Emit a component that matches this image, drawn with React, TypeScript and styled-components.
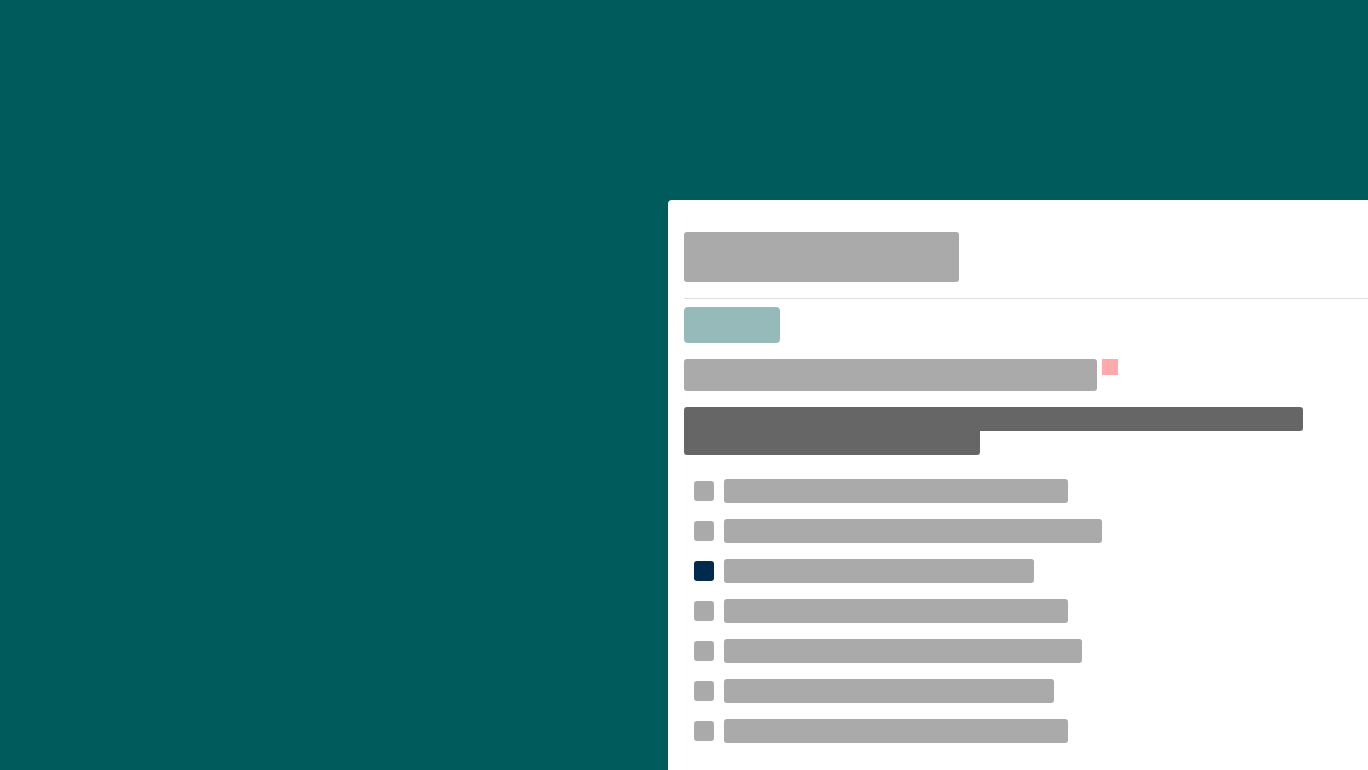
import React from "react";
import styled, { createGlobalStyle } from "styled-components";

const GlobalStyle = createGlobalStyle`
  html, body {
    margin: 0;
    padding: 0;
    background: #005c5c;
    font-family: "Liberation Sans", Arial, sans-serif;
  }
`;

const Page = styled.div`
  width: 1368px;
  height: 770px;
  overflow: hidden;
  background: #005c5c;
  display: flex;
  align-items: flex-start;
  padding: 200px 0 0 668px;
  box-sizing: border-box;
`;

const Card = styled.div`
  flex: 0 0 740px;
  height: 600px;
  background: #ffffff;
  border-radius: 4px 0 0 0;
  padding: 32px 0 0 16px;
  box-sizing: border-box;
  display: flex;
  flex-direction: column;
`;

const TitleBlock = styled.div`
  width: 275px;
  height: 50px;
  background: #aaaaaa;
  border-radius: 3px;
`;

const Divider = styled.hr`
  border: none;
  border-top: 1px solid #dddddd;
  margin: 16px 0 0;
  width: 100%;
`;

const Tag = styled.div`
  width: 96px;
  height: 36px;
  margin-top: 8px;
  background: #96baba;
  border-radius: 4px;
`;

const LabelRow = styled.div`
  display: flex;
  align-items: flex-start;
  gap: 5px;
  margin-top: 16px;
`;

const Label = styled.div`
  width: 413px;
  height: 32px;
  background: #aaaaaa;
  border-radius: 3px;
`;

const Required = styled.span`
  width: 16px;
  height: 16px;
  background: #ffaaaa;
`;

const Headline = styled.div`
  margin-top: 16px;
  display: flex;
  flex-direction: column;
`;

const HeadLine = styled.div<{ $w: number; $last?: boolean }>`
  width: ${(p) => p.$w}px;
  height: 24px;
  background: #666666;
  border-radius: ${(p) => (p.$last ? "0 0 3px 3px" : "3px 3px 3px 0")};
`;

const Options = styled.ul`
  list-style: none;
  margin: 24px 0 0;
  padding: 0 0 0 10px;
  display: flex;
  flex-direction: column;
  gap: 16px;
`;

const Option = styled.li`
  display: flex;
  align-items: center;
  gap: 10px;
  height: 24px;
`;

const Box = styled.span<{ $checked?: boolean }>`
  width: 20px;
  height: 20px;
  border-radius: 3px;
  background: ${(p) => (p.$checked ? "#002b4d" : "#aaaaaa")};
`;

const OptionText = styled.span<{ $w: number }>`
  width: ${(p) => p.$w}px;
  height: 24px;
  background: #aaaaaa;
  border-radius: 3px;
`;

const options = [
  { w: 344 },
  { w: 378 },
  { w: 310, checked: true },
  { w: 344 },
  { w: 358 },
  { w: 330 },
  { w: 344 },
];

export default function App() {
  return (
    <>
      <GlobalStyle />
      <Page>
        <Card>
          <TitleBlock />
          <Divider />
          <Tag />
          <LabelRow>
            <Label />
            <Required />
          </LabelRow>
          <Headline>
            <HeadLine $w={619} />
            <HeadLine $w={296} $last />
          </Headline>
          <Options>
            {options.map((o, i) => (
              <Option key={i}>
                <Box $checked={o.checked} />
                <OptionText $w={o.w} />
              </Option>
            ))}
          </Options>
        </Card>
      </Page>
    </>
  );
}
